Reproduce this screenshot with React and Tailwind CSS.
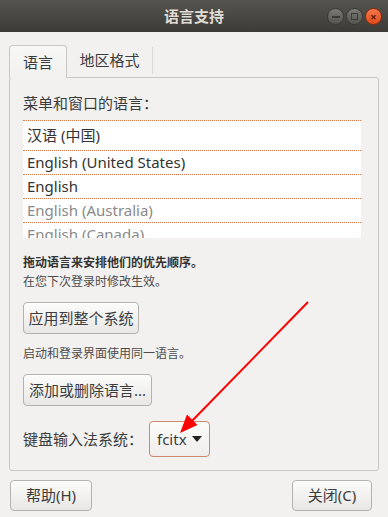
import React from "react";

// Fenêtre "语言支持" — style Ubuntu Ambiance
const langues = [
  { nom: "汉语 (中国)", actif: true, haut: true },
  { nom: "English (United States)", actif: true },
  { nom: "English", actif: true },
  { nom: "English (Australia)", actif: false },
  { nom: "English (Canada)", actif: false },
];

function Bouton({ children, className = "" }) {
  return (
    <button
      className={
        "h-8 rounded-[4px] border border-[#b4b2ad] bg-gradient-to-b from-[#fcfcfb] to-[#e8e7e5] text-[15px] text-[#3c3c3c] shadow-[inset_0_1px_0_#fff] " +
        className
      }
    >
      {children}
    </button>
  );
}

export default function App() {
  return (
    <div className="relative w-[388px] h-[517px] overflow-hidden bg-[#f2f1f0] font-['Noto_Sans','Noto_Sans_CJK_SC',sans-serif] text-[#3c3c3c]">
      {/* Barre de titre */}
      <div className="relative h-8 flex items-center justify-center bg-gradient-to-b from-[#56544f] to-[#3c3b37]">
        <span className="text-[15px] font-semibold text-[#dfdbd2]">语言支持</span>
        <div className="absolute right-[6px] top-[8px] flex gap-[2px]">
          <div className="w-[17px] h-[17px] rounded-full border border-[#3a3935] bg-gradient-to-b from-[#7b7a75] to-[#55544f] flex items-center justify-center">
            <div className="w-[8px] h-[2px] bg-[#3c3b37]" />
          </div>
          <div className="w-[17px] h-[17px] rounded-full border border-[#3a3935] bg-gradient-to-b from-[#7b7a75] to-[#55544f] flex items-center justify-center">
            <div className="w-[7px] h-[7px] border border-[#3c3b37]" />
          </div>
          <div className="w-[17px] h-[17px] rounded-full border border-[#8c2a0e] bg-gradient-to-b from-[#f5784a] to-[#df4a16] flex items-center justify-center text-[11px] leading-none text-[#5a1a06] font-bold">
            ×
          </div>
        </div>
      </div>

      <div className="px-[9px] pt-[12px]">
        {/* Onglets */}
        <div className="flex h-[33px] items-stretch">
          <div className="w-[58px] rounded-t-[4px] border border-b-0 border-[#c9c7c3] bg-gradient-to-b from-[#f7f7f6] to-[#f2f1f0] flex items-center justify-center text-[15px] relative top-[1px]">
            语言
          </div>
          <div className="w-[86px] border-r border-[#dcdad6] my-[3px] flex items-center justify-center text-[15px]">
            地区格式
          </div>
        </div>

        {/* Panneau */}
        <div className="h-[394px] rounded-[3px] border border-[#c9c7c3] px-[13px] pt-[16px]">
          <div className="text-[15px] leading-[18px]">菜单和窗口的语言：</div>

          <div className="mt-[8px] w-[338px] h-[118px] overflow-hidden bg-white">
            {langues.map((l) => (
              <div
                key={l.nom}
                className={
                  "border-t border-dotted border-[#e2713c] pl-[4px] flex items-center text-[15px] " +
                  (l.haut ? "h-[30px] " : "h-[24px] ") +
                  (l.actif ? "text-[#333]" : "text-[#8a8a8a]")
                }
              >
                {l.nom}
              </div>
            ))}
          </div>

          <div className="mt-[15px] text-[12px] leading-[19px] font-bold text-[#333]">拖动语言来安排他们的优先顺序。</div>
          <div className="text-[12px] leading-[19px] text-[#4c4c4c]">在您下次登录时修改生效。</div>

          <Bouton className="mt-[11px] w-[116px]">应用到整个系统</Bouton>

          <div className="mt-[10px] text-[12px] leading-[19px] text-[#4c4c4c]">启动和登录界面使用同一语言。</div>

          <Bouton className="mt-[11px] w-[129px]">添加或删除语言...</Bouton>

          <div className="mt-[15px] flex items-center">
            <span className="w-[126px] text-[15px]">键盘输入法系统：</span>
            <div className="h-[36px] w-[61px] rounded-[4px] border border-[#c98b6c] bg-gradient-to-b from-[#fcfcfb] to-[#efeeec] flex items-center pl-[7px] gap-[5px]">
              <span className="text-[15px]">fcitx</span>
              <svg width="10" height="6" viewBox="0 0 10 6">
                <path d="M0 0 L10 0 L5 6 Z" fill="#222" />
              </svg>
            </div>
          </div>
        </div>

        {/* Boutons du bas */}
        <div className="mt-[9px] flex justify-between pl-px pr-[7px]">
          <Bouton className="w-[82px] h-[31px] text-[#2f7fbf]">帮助(H)</Bouton>
          <Bouton className="w-[80px] h-[31px]">关闭(C)</Bouton>
        </div>
      </div>

      {/* Flèche d'annotation rouge */}
      <svg className="absolute left-0 top-0 pointer-events-none" width="388" height="517">
        <line x1="308" y1="302" x2="190" y2="423" stroke="#f00" strokeWidth="2" />
        <polygon points="180,433 197.5,425 187,414.5" fill="#f00" />
      </svg>
    </div>
  );
}
